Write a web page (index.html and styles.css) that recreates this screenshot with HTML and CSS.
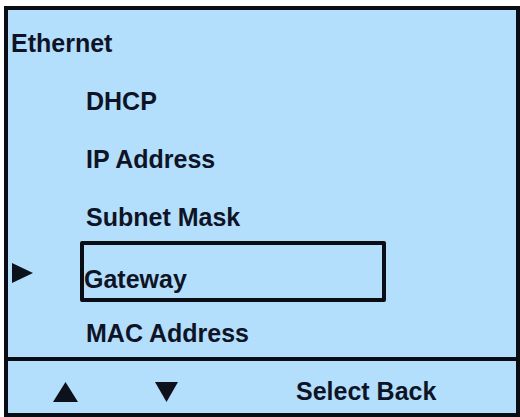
FILE: index.html
```html
<!DOCTYPE html>
<html>
<head>
<meta charset="utf-8">
<link rel="stylesheet" href="styles.css">
</head>
<body>
<div class="screen">
  <div class="menu">
    <div class="title">Ethernet</div>
    <div class="item">DHCP</div>
    <div class="item">IP Address</div>
    <div class="item">Subnet Mask</div>
    <div class="item selected">
      <svg class="pointer" width="21" height="20" viewBox="0 0 21 20"><polygon points="0,0 21,10 0,20" fill="#0c111c"/></svg>
      <div class="box">Gateway</div>
    </div>
    <div class="item">MAC Address</div>
  </div>
  <div class="footer">
    <svg class="up" width="25" height="20" viewBox="0 0 25 20"><polygon points="12.5,0 25,20 0,20" fill="#0c111c"/></svg>
    <svg class="down" width="23" height="20" viewBox="0 0 23 20"><polygon points="0,0 23,0 11.5,20" fill="#0c111c"/></svg>
    <div class="label">Select Back</div>
  </div>
</div>
</body>
</html>
```

FILE: styles.css
```css
html, body {
  margin: 0;
  padding: 0;
  background: #ffffff;
}

.screen {
  margin: 6px 0 0 4px;
  width: 516px;
  height: 411px;
  box-sizing: border-box;
  border: 4px solid #0a0d14;
  background: #b3defc;
  display: flex;
  flex-direction: column;
  font-family: "Liberation Sans", Arial, sans-serif;
  font-weight: bold;
  font-size: 25px;
  color: #0e1426;
}

.menu {
  height: 347px;
  box-sizing: border-box;
  padding-top: 4px;
}

.title {
  height: 58px;
  line-height: 58px;
  padding-left: 3px;
}

.item {
  height: 58px;
  line-height: 58px;
  padding-left: 78px;
  white-space: nowrap;
}

.item.selected {
  display: flex;
  align-items: flex-start;
  padding-left: 4px;
}

.pointer {
  margin-top: 17px;
  margin-right: 47px;
  flex: none;
}

.box {
  width: 306px;
  height: 61px;
  box-sizing: border-box;
  margin-top: -5px;
  border: 4px solid #0a0d14;
  border-radius: 2px;
  line-height: normal;
  padding-top: 20px;
  padding-left: 0;
}

.footer {
  flex: 1;
  border-top: 4px solid #0a0d14;
  display: flex;
  align-items: flex-start;
  padding-top: 16px;
  box-sizing: border-box;
}

.up {
  margin-left: 45px;
  margin-top: 5px;
}

.down {
  margin-left: 77px;
  margin-top: 5px;
}

.label {
  margin-left: 118px;
  line-height: normal;
}
```
